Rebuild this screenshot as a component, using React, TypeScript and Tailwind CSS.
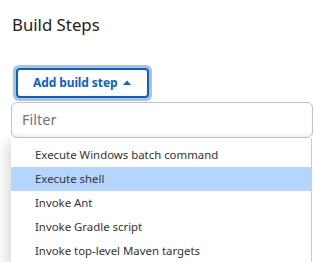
import React from "react";

export default function App() {
  const items = [
    "Execute Windows batch command",
    "Execute shell",
    "Invoke Ant",
    "Invoke Gradle script",
    "Invoke top-level Maven targets",
  ];
  return (
    <div
      className="w-[314px] h-[262px] overflow-hidden bg-white text-[#333]"
      style={{ fontFamily: '"Noto Sans", "Open Sans", sans-serif' }}
    >
      <div className="pl-[12px] pt-[13px]">
        <h2 className="text-[16.8px] leading-[24px] text-[#222] font-normal">Build Steps</h2>
      </div>
      <div className="pl-[13px] pt-[28px]">
        <div className="inline-flex rounded-[6px] p-[3px] bg-[#a8c3da]">
          <button className="flex items-center gap-[6px] h-[30px] pl-[15px] pr-[16px] rounded-[4px] border-2 border-[#0b5fd0] bg-white text-[#0b5fd0] text-[12px] font-bold tracking-[-0.1px]">
            <span>Add build step</span>
            <svg width="8" height="5" viewBox="0 0 8 5" className="mt-[-1px]">
              <path d="M0 5 L4 0.5 L8 5 Z" fill="#0b5fd0" />
            </svg>
          </button>
        </div>
      </div>
      <div className="pl-[11px] pr-[1px] pt-[1px]">
        <div className="h-[36px] rounded-[6px] border border-[#b9c4cc] shadow-[inset_0_-2px_3px_rgba(0,0,0,0.05)] flex items-center pl-[10px] text-[14.5px] text-[#757575]">
          Filter
        </div>
        <div className="mr-[1px] bg-white border-r border-[#c8cdd1] shadow-[-6px_4px_10px_rgba(0,0,0,0.12)] pt-[5px]">
          {items.map((t, i) => (
            <div
              key={t}
              className={
                "h-[24px] flex items-center pl-[24px] text-[11.4px] text-[#333] " +
                (i === 1 ? "bg-[#b3d5fe]" : "")
              }
            >
              {t}
            </div>
          ))}
        </div>
      </div>
    </div>
  );
}
